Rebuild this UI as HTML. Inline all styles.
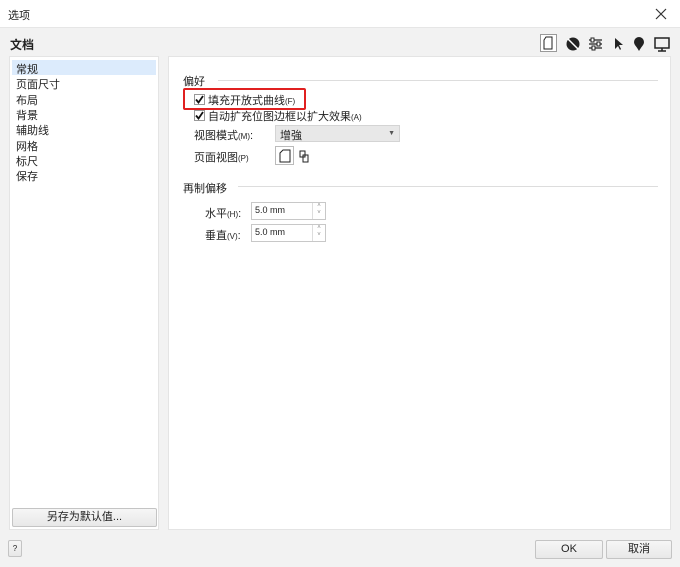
<!DOCTYPE html>
<html><head><meta charset="utf-8"><style>
*{margin:0;padding:0;box-sizing:border-box}
body{width:680px;height:567px;background:#f2f2f2;font-family:"Liberation Sans","Noto Sans CJK SC",sans-serif;font-size:11px;color:#222;position:relative;overflow:hidden}
.a{position:absolute}
.title{left:0;top:0;width:680px;height:28px;background:#fff;border-bottom:1px solid #e6e6e6}
.btn{background:linear-gradient(#f6f6f6,#e8e8e8);border:1px solid #c4c4c4;border-radius:2px;text-align:center}
.inp{background:#fff;border:1px solid #c8c8c8}
.li{left:16px;font-size:11px}
.sm{font-size:8px}
.cb{width:11px;height:11px;border:1px solid #999;background:#fff}
</style></head><body>
<div class="a title"></div>
<div class="a" style="left:8px;top:7px;font-size:11px">选项</div>
<svg class="a" style="left:655px;top:8px" width="12" height="12"><path d="M1 1l10 10M11 1L1 11" stroke="#333" stroke-width="1.2"/></svg>
<div class="a" style="left:10px;top:36px;font-size:12px;font-weight:bold">文档</div>
<svg class="a" style="left:540px;top:34px" width="132" height="20" viewBox="0 0 132 20">
<rect x="0.5" y="0.5" width="16" height="17" fill="#fff" stroke="#999"/>
<path d="M6 3h6v12H4V6z" fill="none" stroke="#222"/>
<circle cx="33" cy="10" r="6.5" fill="#222"/><path d="M28 5l10 10" stroke="#fff" stroke-width="1.5"/>
<path d="M49 6h13M49 10h13M49 14h13" stroke="#222" stroke-width="1.3"/><rect x="51" y="4" width="3" height="4" fill="#fff" stroke="#222"/><rect x="57" y="8" width="3" height="4" fill="#fff" stroke="#222"/><rect x="52" y="12" width="3" height="4" fill="#fff" stroke="#222"/>
<path d="M75 4v11l3-3 2 4 1-1-2-4h4z" fill="#222"/>
<path d="M99 3a5 5 0 0 1 5 5c0 3-3 5-5 9c-2-4-5-6-5-9a5 5 0 0 1 5-5z" fill="#222"/>
<rect x="115" y="4" width="14" height="10" fill="none" stroke="#222" stroke-width="1.5"/><path d="M122 14v3M118 17h8" stroke="#222" stroke-width="1.5"/>
</svg>
<div class="a" style="left:9px;top:56px;width:150px;height:474px;background:#fff;border:1px solid #e4e4e4"></div>
<div class="a" style="left:12px;top:60px;width:144px;height:15px;background:#dcebfc"></div>
<div class="a li" style="top:61px">常规</div>
<div class="a li" style="top:76px">页面尺寸</div>
<div class="a li" style="top:92px">布局</div>
<div class="a li" style="top:107px">背景</div>
<div class="a li" style="top:122px">辅助线</div>
<div class="a li" style="top:138px">网格</div>
<div class="a li" style="top:153px">标尺</div>
<div class="a li" style="top:168px">保存</div>
<div class="a btn" style="left:12px;top:508px;width:145px;height:19px;line-height:17px">另存为默认值...</div>
<div class="a" style="left:168px;top:56px;width:503px;height:474px;background:#fff;border:1px solid #e4e4e4"></div>
<div class="a" style="left:183px;top:73px">偏好</div>
<div class="a" style="left:218px;top:80px;width:440px;height:1px;background:#ddd"></div>
<div class="a" style="left:183px;top:88px;width:123px;height:22px;border:2px solid #e02020;border-radius:2px"></div>
<div class="a cb" style="left:194px;top:94px"></div>
<svg class="a" style="left:194px;top:94px" width="11" height="11"><path d="M2 5.5l2.5 3L9 2" fill="none" stroke="#111" stroke-width="1.8"/></svg>
<div class="a" style="left:208px;top:92px">填充开放式曲线<span class="sm">(F)</span></div>
<div class="a cb" style="left:194px;top:110px"></div>
<svg class="a" style="left:194px;top:110px" width="11" height="11"><path d="M2 5.5l2.5 3L9 2" fill="none" stroke="#111" stroke-width="1.8"/></svg>
<div class="a" style="left:208px;top:108px">自动扩充位图边框以扩大效果<span class="sm">(A)</span></div>
<div class="a" style="left:194px;top:127px">视图模式<span class="sm">(M)</span>:</div>
<div class="a" style="left:275px;top:125px;width:125px;height:17px;background:#e8e8e8;border:1px solid #d4d4d4;padding:1px 4px">增強<span style="position:absolute;right:4px;top:4px;font-size:7px;color:#555">▼</span></div>
<div class="a" style="left:194px;top:149px">页面视图<span class="sm">(P)</span></div>
<div class="a" style="left:275px;top:146px;width:19px;height:19px;border:1px solid #bbb"></div>
<svg class="a" style="left:277px;top:148px" width="36" height="16"><path d="M6 2h7v12H3V5z" fill="none" stroke="#222"/><path d="M23 3h5v6h-5zM26 7h5v7h-5z" fill="#fff" stroke="#222"/></svg>
<div class="a" style="left:183px;top:180px">再制偏移</div>
<div class="a" style="left:238px;top:186px;width:420px;height:1px;background:#ddd"></div>
<div class="a" style="left:205px;top:205px">水平<span class="sm">(H)</span>:</div>
<div class="a inp" style="left:251px;top:202px;width:75px;height:18px;padding:2px 3px;font-size:9px">5.0 mm</div>
<div class="a" style="left:312px;top:203px;width:13px;height:16px;border-left:1px solid #ddd;font-size:6px;color:#888;text-align:center;line-height:7px">˄<br>˅</div>
<div class="a" style="left:205px;top:227px">垂直<span class="sm">(V)</span>:</div>
<div class="a inp" style="left:251px;top:224px;width:75px;height:18px;padding:2px 3px;font-size:9px">5.0 mm</div>
<div class="a" style="left:312px;top:225px;width:13px;height:16px;border-left:1px solid #ddd;font-size:6px;color:#888;text-align:center;line-height:7px">˄<br>˅</div>
<div class="a btn" style="left:8px;top:540px;width:14px;height:17px;font-size:8px;line-height:15px">?</div>
<div class="a btn" style="left:535px;top:540px;width:68px;height:19px;line-height:17px">OK</div>
<div class="a btn" style="left:606px;top:540px;width:66px;height:19px;line-height:17px">取消</div>
</body></html>
